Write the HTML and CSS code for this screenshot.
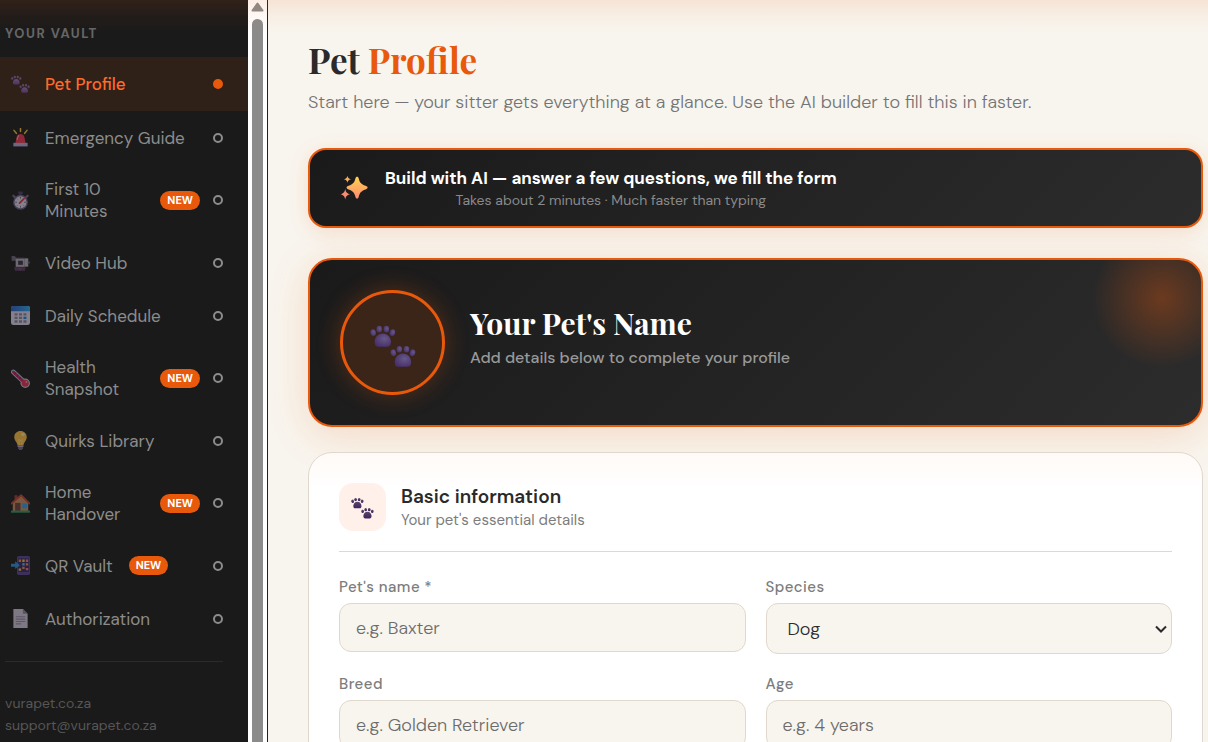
FILE: index.html
```html
<!DOCTYPE html>
<html lang="en">
<head>
<meta charset="utf-8">
<title>Pet Profile</title>
<link rel="stylesheet" href="styles.css">
</head>
<body>
<svg class="defs" aria-hidden="true">
  <defs>
    <linearGradient id="gPaw" x1="0" y1="0" x2="0" y2="1"><stop offset="0" stop-color="#54496a"/><stop offset="1" stop-color="#43205f"/></linearGradient>
    <radialGradient id="gPawSoft" cx=".6" cy=".4" r=".65"><stop offset="0" stop-color="#665987"/><stop offset="1" stop-color="#48306c"/></radialGradient>
    <linearGradient id="gPawLight" x1="0" y1="0" x2="0" y2="1"><stop offset="0" stop-color="#8a7bb0"/><stop offset="1" stop-color="#6c3fa0"/></linearGradient>
    <linearGradient id="gStar" x1="0" y1="0" x2="0" y2="1"><stop offset="0" stop-color="#ffd34f"/><stop offset="1" stop-color="#ff8a70"/></linearGradient>
    <linearGradient id="gCal" x1="0" y1="0" x2="1" y2="0"><stop offset="0" stop-color="#2c5fc9"/><stop offset="1" stop-color="#2fa8f0"/></linearGradient>
    <g id="paw">
      <ellipse cx="2.200" cy="5" rx="1.900" ry="2.400" transform="rotate(-12 2.200 5)"/>
      <ellipse cx="6.400" cy="2.600" rx="1.900" ry="2.300"/>
      <ellipse cx="11.400" cy="2.600" rx="1.900" ry="2.300"/>
      <ellipse cx="15.600" cy="5" rx="1.900" ry="2.400" transform="rotate(12 15.600 5)"/>
      <path d="M8.900 5.600c3.200 0 5.700 2.700 5.700 6 0 2.200-1 3.200-2.500 3.200H5.700c-1.500 0-2.500-1-2.500-3.200 0-3.300 2.500-6 5.700-6z"/>
    </g>
    <symbol id="i-paws" viewBox="0 0 32 32"><g fill="url(#gPaw)"><use href="#paw" x="0" y="1"/><use href="#paw" x="14" y="15"/></g></symbol>
    <symbol id="i-paws-soft" viewBox="0 0 32 32"><g fill="url(#gPawSoft)"><use href="#paw" x="0" y="1"/><use href="#paw" x="14" y="15"/></g></symbol>
    <symbol id="i-paws-light" viewBox="0 0 32 32"><g fill="url(#gPawLight)"><use href="#paw" x="0" y="1"/><use href="#paw" x="14" y="15"/></g></symbol>
    <symbol id="i-siren" viewBox="0 0 32 32">
      <path d="M16 1v5M5 4l4 5M27 4l-4 5" stroke="#f5c23b" stroke-width="2.600" stroke-linecap="round"/>
      <path d="M7 27l2.500-12c.6-3 3-5 6.500-5s5.900 2 6.500 5L25 27z" fill="#f0354f"/>
      <path d="M13 13c-1.500 1-2 3-2.500 6" stroke="#ff9aa8" stroke-width="2" fill="none" stroke-linecap="round"/>
      <path d="M4 25h24v6H4z" fill="#b9a5d8"/>
    </symbol>
    <symbol id="i-watch" viewBox="0 0 32 32">
      <path d="M12 1h8v4h-2v4h-4V5h-2z" fill="#4a3c66"/><path d="M4 8l4 4M28 8l-4 4" stroke="#6d6286" stroke-width="4" stroke-linecap="round"/>
      <circle cx="16" cy="19" r="12.500" fill="#6d5f8c"/><circle cx="16" cy="19" r="10" fill="#ded6ea"/>
      <path d="M16 10v3M16 25v3M7 19h3M22 19h3M10 13l1 1M10 25l1-1M22 25l-1-1" stroke="#71677f" stroke-width="1.600"/>
      <path d="M14.500 20.500L22 13" stroke="#e8304f" stroke-width="3" stroke-linecap="round"/>
    </symbol>
    <symbol id="i-video" viewBox="0 0 32 32">
      <path d="M1 5h5l3 3h14v16H8V13H1z" fill="#6f657b"/><path d="M23 9h6v14h-6z" fill="#b5aebd"/><circle cx="30" cy="16" r="2" fill="#655c70"/>
      <path d="M8 10h15v13H8z" fill="#b1aab8"/><path d="M12 13h8v7h-8z" fill="#3b3145"/><path d="M5 24h20l-2 6H7z" fill="#5c3d64"/><circle cx="15" cy="27" r="1.400" fill="#e8304f"/>
    </symbol>
    <symbol id="i-cal" viewBox="0 0 32 32">
      <rect x="0" y="0" width="32" height="32" rx="4" fill="#ddd4ec"/><path d="M4 0h24a4 4 0 014 4v5H0V4a4 4 0 014-4z" fill="url(#gCal)"/>
      <g fill="#8c8499"><path d="M6 12h5v4H6zM13.500 12h5v4h-5zM21 12h5v4h-5zM6 18h5v4H6zM13.500 18h5v4h-5zM6 24h5v4H6zM13.500 24h5v4h-5zM21 24h5v4h-5z"/></g><path d="M21 18h5v4h-5z" fill="#1686d9"/>
    </symbol>
    <symbol id="i-thermo" viewBox="0 0 32 32">
      <path d="M4 5l18 17" stroke="#a9cbe0" stroke-width="8" stroke-linecap="round"/><circle cx="24" cy="24" r="8" fill="#a9cbe0"/>
      <path d="M4 5l18 17" stroke="#c91f5c" stroke-width="5" stroke-linecap="round"/><circle cx="24" cy="24" r="6" fill="#e8304f"/>
      <path d="M8 6l-2 3M12 10l-2 3M16 14l-2 3" stroke="#5d2146" stroke-width="1.600"/><circle cx="26" cy="22" r="1.600" fill="#ff93a5"/>
    </symbol>
    <symbol id="i-bulb" viewBox="0 0 32 32">
      <path d="M16 0c6 0 10.500 4.400 10.500 10 0 6-4.500 8-5.500 14H11C10 18 5.500 16 5.500 10 5.500 4.400 10 0 16 0z" fill="#ffbe45"/>
      <path d="M14 23l-1-9 3 2 3-2-1 9" fill="none" stroke="#ffdf72" stroke-width="1.500"/><ellipse cx="20" cy="6" rx="3" ry="2.500" fill="#ffe899"/>
      <path d="M11 24h10v3H11z" fill="#b7a8c9"/><path d="M12 27h8v2l-2 3h-4l-2-3z" fill="#786889"/>
    </symbol>
    <symbol id="i-house" viewBox="0 0 32 32">
      <path d="M6 2h5v10H6z" fill="#9c3f38"/><path d="M3 15L17 3l12 12v15H3z" fill="#c98961"/><path d="M7 15h9v15H7z" fill="#70403c"/>
      <path d="M1 16L17 2l14 14" fill="none" stroke="#c94336" stroke-width="3" stroke-linejoin="round" stroke-linecap="round"/>
      <path d="M19 16h8v8h-8z" fill="#2f9ee8"/><path d="M0 28h32v3.500H0z" fill="#2f9a62"/>
    </symbol>
    <symbol id="i-phone" viewBox="0 0 32 32">
      <rect x="10" y="0" width="22" height="32" rx="3" fill="#594294"/><path d="M12 4h18v23H12z" fill="#382866"/>
      <path d="M13 6h4v4h-4zM25 12h4v4h-4zM19 18h4v4h-4z" fill="#f2894b"/><path d="M19 6h4v4h-4zM13 21h4v4h-4z" fill="#eac24a"/><path d="M25 6h4v4h-4zM25 20h4v4h-4z" fill="#e87a8d"/><path d="M19 12h4v4h-4z" fill="#56b9ed"/>
      <path d="M0 13h7V9l8 6.500L7 22v-4H0z" fill="#2f8fd8"/>
    </symbol>
    <symbol id="i-doc" viewBox="0 0 32 32">
      <path d="M4 0h16l8 8v24H4z" fill="#cfc6dc"/><path d="M20 0l8 8h-8z" fill="#8c819b"/><path d="M8 13h16M8 17h16M8 21h16M8 25h9" stroke="#958ba3" stroke-width="1.800"/>
    </symbol>
    <symbol id="i-stars" viewBox="0 0 32 32">
      <path fill="url(#gStar)" d="M19.500 3c1 0 1.500.7 1.900 2.200 1.200 4.700 2.600 6.400 7.800 8.300 1.700.6 2.300 1.100 2.300 2s-.6 1.500-2.300 2.100c-5.200 1.900-6.600 3.600-7.800 8.300-.4 1.500-.9 2.200-1.900 2.200s-1.500-.7-1.900-2.200c-1.200-4.700-2.600-6.400-7.800-8.300-1.700-.6-2.300-1.200-2.300-2.100s.6-1.400 2.300-2c5.200-1.900 6.600-3.600 7.800-8.300C18 3.700 18.500 3 19.500 3z"/>
      <path fill="#f9ae59" d="M8.500 2c.7 2.600 1.200 3.200 4 4-2.800.8-3.300 1.400-4 4-.7-2.600-1.200-3.200-4-4 2.800-.8 3.300-1.400 4-4z"/>
      <path fill="#fb8a72" d="M6 17c1 4 1.700 4.900 5.500 6-3.800 1.100-4.500 2-5.500 6-1-4-1.700-4.900-5.500-6 3.800-1.100 4.500-2 5.500-6z"/>
    </symbol>
  </defs>
</svg>
<div class="app">
  <aside class="sidebar">
    <h2 class="sidebar-title">YOUR VAULT</h2>
    <nav class="nav">
      <a class="nav-item active" href="#profile"><svg class="nav-icon"><use href="#i-paws-light"/></svg><span class="nav-label">Pet Profile</span><span class="dot"></span></a>
      <a class="nav-item" href="#emergency"><svg class="nav-icon"><use href="#i-siren"/></svg><span class="nav-label">Emergency Guide</span><span class="dot"></span></a>
      <a class="nav-item" href="#first"><svg class="nav-icon"><use href="#i-watch"/></svg><span class="nav-label">First 10 Minutes</span><span class="badge">NEW</span><span class="dot"></span></a>
      <a class="nav-item" href="#video"><svg class="nav-icon"><use href="#i-video"/></svg><span class="nav-label">Video Hub</span><span class="dot"></span></a>
      <a class="nav-item" href="#schedule"><svg class="nav-icon"><use href="#i-cal"/></svg><span class="nav-label">Daily Schedule</span><span class="dot"></span></a>
      <a class="nav-item" href="#health"><svg class="nav-icon"><use href="#i-thermo"/></svg><span class="nav-label">Health Snapshot</span><span class="badge">NEW</span><span class="dot"></span></a>
      <a class="nav-item" href="#quirks"><svg class="nav-icon"><use href="#i-bulb"/></svg><span class="nav-label">Quirks Library</span><span class="dot"></span></a>
      <a class="nav-item" href="#home"><svg class="nav-icon"><use href="#i-house"/></svg><span class="nav-label">Home Handover</span><span class="badge">NEW</span><span class="dot"></span></a>
      <a class="nav-item" href="#qr"><svg class="nav-icon"><use href="#i-phone"/></svg><span class="nav-label">QR Vault</span><span class="badge">NEW</span><span class="dot"></span></a>
      <a class="nav-item" href="#auth"><svg class="nav-icon"><use href="#i-doc"/></svg><span class="nav-label">Authorization</span><span class="dot"></span></a>
    </nav>
    <footer class="sidebar-foot">
      <a href="#site">vurapet.co.za</a>
      <a href="#support">support@vurapet.co.za</a>
    </footer>
  </aside>
  <div class="scroll" aria-hidden="true">
    <svg class="scroll-up" viewBox="0 0 13 10"><path d="M6.500 1.500L11.500 8.500H1.500z" fill="#8b8b8b" stroke="#8b8b8b" stroke-width="2" stroke-linejoin="round"/></svg>
    <div class="scroll-thumb"></div>
  </div>
  <main class="main">
    <header class="page-head">
      <h1>Pet <span class="accent">Profile</span></h1>
      <p>Start here — your sitter gets everything at a glance. Use the AI builder to fill this in faster.</p>
    </header>
    <button class="ai" type="button">
      <svg class="ai-icon"><use href="#i-stars"/></svg>
      <span class="ai-text"><span class="ai-title">Build with AI — answer a few questions, we fill the form</span><span class="ai-sub">Takes about 2 minutes · Much faster than typing</span></span>
    </button>
    <section class="hero">
      <div class="avatar"><svg class="avatar-icon"><use href="#i-paws-soft"/></svg></div>
      <div class="hero-text">
        <h2 class="hero-name">Your Pet's Name</h2>
        <p class="hero-sub">Add details below to complete your profile</p>
      </div>
    </section>
    <section class="card">
      <div class="card-head">
        <div class="card-badge"><svg class="card-icon"><use href="#i-paws"/></svg></div>
        <div>
          <h3 class="card-title">Basic information</h3>
          <p class="card-sub">Your pet's essential details</p>
        </div>
      </div>
      <form class="form">
        <div class="field"><label for="name">Pet's name *</label><input id="name" type="text" placeholder="e.g. Baxter"></div>
        <div class="field"><label for="species">Species</label><div class="select"><select id="species"><option>Dog</option><option>Cat</option></select><svg class="chevron" viewBox="0 0 12 8" aria-hidden="true"><path d="M1 1.500l5 5 5-5" fill="none" stroke="#2a2a2a" stroke-width="2"/></svg></div></div>
        <div class="field"><label for="breed">Breed</label><input id="breed" type="text" placeholder="e.g. Golden Retriever"></div>
        <div class="field"><label for="age">Age</label><input id="age" type="text" placeholder="e.g. 4 years"></div>
      </form>
    </section>
  </main>
</div>
</body>
</html>
```
FILE: styles.css
```css
:root {
  --orange: #e8590c;
  --ink: #2a2a2a;
  --cream: #f8f5ee;
  --line: #e0d8cc;
  --muted: #7d7d7d;
  --sans: "DM Sans", Lato, sans-serif;
  --serif: "Playfair Display", "Liberation Serif", serif;
}
* { box-sizing: border-box; }
body {
  margin: 0;
  height: 100vh;
  overflow: hidden;
  background: var(--cream);
  color: var(--ink);
  font-family: var(--sans);
}
h1, h2, h3, p { margin: 0; }
.defs { position: absolute; width: 0; height: 0; }
.app { display: flex; height: 100vh; overflow: hidden; }
.app::before {
  content: "";
  position: absolute;
  inset: 0 0 auto 0;
  height: 34px;
  background: linear-gradient(rgba(232, 89, 12, 0.11), rgba(232, 89, 12, 0.04) 50%, rgba(232, 89, 12, 0));
  z-index: 2;
  pointer-events: none;
}

.sidebar { flex: 0 0 248px; overflow: hidden; background: #1a1a1a; }
.sidebar-title {
  padding: 25px 5px 14px;
  font-size: 13px;
  line-height: 18px;
  letter-spacing: 0.12em;
  color: #666;
}
.nav-item {
  display: flex;
  align-items: center;
  gap: 13px;
  min-height: 53px;
  padding: 14px 25px 14px 11px;
  color: #8c8c8c;
  font-size: 17px;
  font-weight: 400;
  line-height: 22px;
  text-decoration: none;
}
.nav-item.active { min-height: 54px; background: #2f2018; color: #ff6b2b; font-weight: 500; }
.nav-icon { flex: none; width: 19px; height: 19px; margin-right: 2px; opacity: 0.55; }
.badge {
  flex: none;
  margin-left: 3px;
  padding: 0 7px;
  border-radius: 10px;
  background: var(--orange);
  color: #fff;
  font-size: 11px;
  font-weight: 700;
  line-height: 19px;
}
.dot {
  flex: none;
  width: 10px;
  height: 10px;
  margin-left: auto;
  border: 2px solid #8c8c8c;
  border-radius: 50%;
}
.active .dot { border-color: var(--orange); background: var(--orange); }
.sidebar-foot {
  display: flex;
  flex-direction: column;
  margin: 16px 25px 0 5px;
  padding-top: 30px;
  border-top: 1px solid #2b2b2b;
}
.sidebar-foot a { color: #565656; font-size: 14px; line-height: 22px; text-decoration: none; }

.scroll {
  flex: 0 0 20px;
  display: flex;
  flex-direction: column;
  align-items: center;
  padding-top: 2px;
  gap: 7px;
  background: #fff;
  border-right: 1px solid #1d2229;
}
.scroll-up { width: 13px; height: 10px; }
.scroll-thumb { flex: 1; width: 11px; border-radius: 6px 6px 0 0; background: #8b8b8b; }

.main { flex: 1; min-width: 0; padding: 35px 5px 0 40px; }
.page-head h1 { font-family: var(--serif); font-size: 35px; line-height: 50px; }
.accent { color: var(--orange); }
.page-head p { margin: 5px 0 34px; color: #747474; font-size: 18px; font-weight: 300; line-height: 24px; }

.ai {
  display: flex;
  align-items: center;
  gap: 17px;
  width: 100%;
  height: 80px;
  padding: 0 30px;
  border: 2px solid var(--orange);
  border-radius: 18px;
  background: linear-gradient(135deg, #1a1a1a, #2c2c2c);
  box-shadow: 0 4px 20px rgba(232, 89, 12, 0.15);
  font-family: inherit;
  text-align: center;
}
.ai-icon { width: 28px; height: 28px; }
.ai-text { display: flex; flex-direction: column; }
.ai-title { color: #fff; font-size: 17px; font-weight: 700; line-height: 24px; }
.ai-sub { color: #8a8a8a; font-size: 14px; line-height: 20px; }

.hero {
  position: relative;
  display: flex;
  align-items: center;
  gap: 25px;
  margin-top: 30px;
  padding: 30px;
  border: 2px solid var(--orange);
  border-radius: 24px;
  background:
    radial-gradient(circle at calc(100% - 39px) 38px, rgba(232, 89, 12, 0.35), rgba(232, 89, 12, 0) 70px),
    linear-gradient(135deg, #1a1a1a, #2c2c2c);
  background-origin: padding-box;
  box-shadow: 0 8px 40px rgba(232, 89, 12, 0.18);
}
.avatar {
  display: grid;
  place-items: center;
  width: 105px;
  height: 105px;
  border: 3px solid var(--orange);
  border-radius: 50%;
  background: #3b2519;
  box-shadow: 0 0 24px rgba(232, 89, 12, 0.3);
}
.avatar-icon { width: 46px; height: 46px; margin-top: 8px; }
.hero-text { padding-bottom: 12px; }
.hero-name { color: #fff; font-family: var(--serif); font-size: 30px; line-height: 40px; }
.hero-sub { margin-top: 3px; color: #999; font-size: 16px; font-weight: 500; line-height: 24px; }

.card {
  position: relative;
  margin-top: 25px;
  padding: 30px;
  border: 1px solid var(--line);
  border-radius: 24px;
  background: linear-gradient(#fffaf7, #fff 36px);
}
.card-head {
  display: flex;
  align-items: center;
  gap: 15px;
  padding-bottom: 20px;
  border-bottom: 1px solid var(--line);
}
.card-badge {
  display: grid;
  place-items: center;
  width: 47px;
  height: 48px;
  border-radius: 14px;
  background: #fff1ea;
}
.card-icon { width: 23px; height: 23px; margin-top: 2px; }
.card-title { font-size: 19px; font-weight: 600; line-height: 26px; }
.card-sub { color: var(--muted); font-size: 15px; line-height: 20px; }

.form { display: grid; grid-template-columns: 1fr 1fr; gap: 20px; align-items: start; padding-top: 25px; }
.field { display: flex; flex-direction: column; gap: 6px; }
.field label { color: var(--muted); font-size: 15px; font-weight: 500; line-height: 20px; letter-spacing: 0.03em; }
.field input, .field select {
  width: 100%;
  height: 49px;
  padding: 0 16px;
  border: 1px solid var(--line);
  border-radius: 12px;
  background: var(--cream);
  color: var(--ink);
  font-family: inherit;
  font-size: 18px;
  font-weight: 300;
}
.select { display: grid; position: relative; }
.field select { height: 51px; padding: 0 21px; appearance: none; }
.chevron {
  position: absolute;
  right: 5px;
  top: 22px;
  width: 12px;
  height: 8px;
  pointer-events: none;
}
.field input::placeholder { color: #6c6c6c; opacity: 1; }
```
